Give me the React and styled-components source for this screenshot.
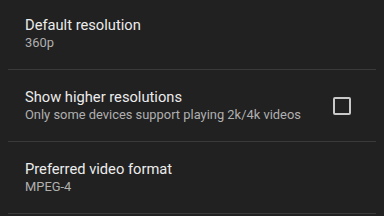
import React from "react";
import styled, { createGlobalStyle } from "styled-components";

const Global = createGlobalStyle`
  html, body { margin: 0; padding: 0; background: #212121; }
  body { font-family: Roboto, "Noto Sans", sans-serif; overflow: hidden; }
  #root { width: 384px; height: 216px; overflow: hidden; }
`;

const List = styled.div`
  display: flex;
  flex-direction: column;
  margin-top: -2px;
  background: #212121;
`;

const Row = styled.div`
  display: flex;
  align-items: center;
  height: 71px;
  padding: 0 33px 0 25px;
  box-sizing: border-box;
`;

const Texts = styled.div`
  flex: 1;
  display: flex;
  flex-direction: column;
`;

const Title = styled.div`
  font-size: 14.7px;
  line-height: 19px;
  color: #ececec;
`;

const Subtitle = styled.div`
  font-size: 12.9px;
  line-height: 16px;
  color: #b0b0b0;
`;

const Divider = styled.div`
  height: 1px;
  margin: 0 8px;
  background: #3a3a3a;
`;

const Checkbox = styled.div`
  width: 18px;
  height: 18px;
  box-sizing: border-box;
  border: 2px solid #c9c9c9;
  border-radius: 2px;
  flex-shrink: 0;
`;

const items = [
  { title: "Default resolution", sub: "360p" },
  { title: "Show higher resolutions", sub: "Only some devices support playing 2k/4k videos", check: true },
  { title: "Preferred video format", sub: "MPEG-4" },
];

export default function App() {
  return (
    <>
      <Global />
      <List>
        {items.map((it) => (
          <React.Fragment key={it.title}>
            <Row>
              <Texts>
                <Title>{it.title}</Title>
                <Subtitle>{it.sub}</Subtitle>
              </Texts>
              {it.check && <Checkbox />}
            </Row>
            <Divider />
          </React.Fragment>
        ))}
      </List>
    </>
  );
}
